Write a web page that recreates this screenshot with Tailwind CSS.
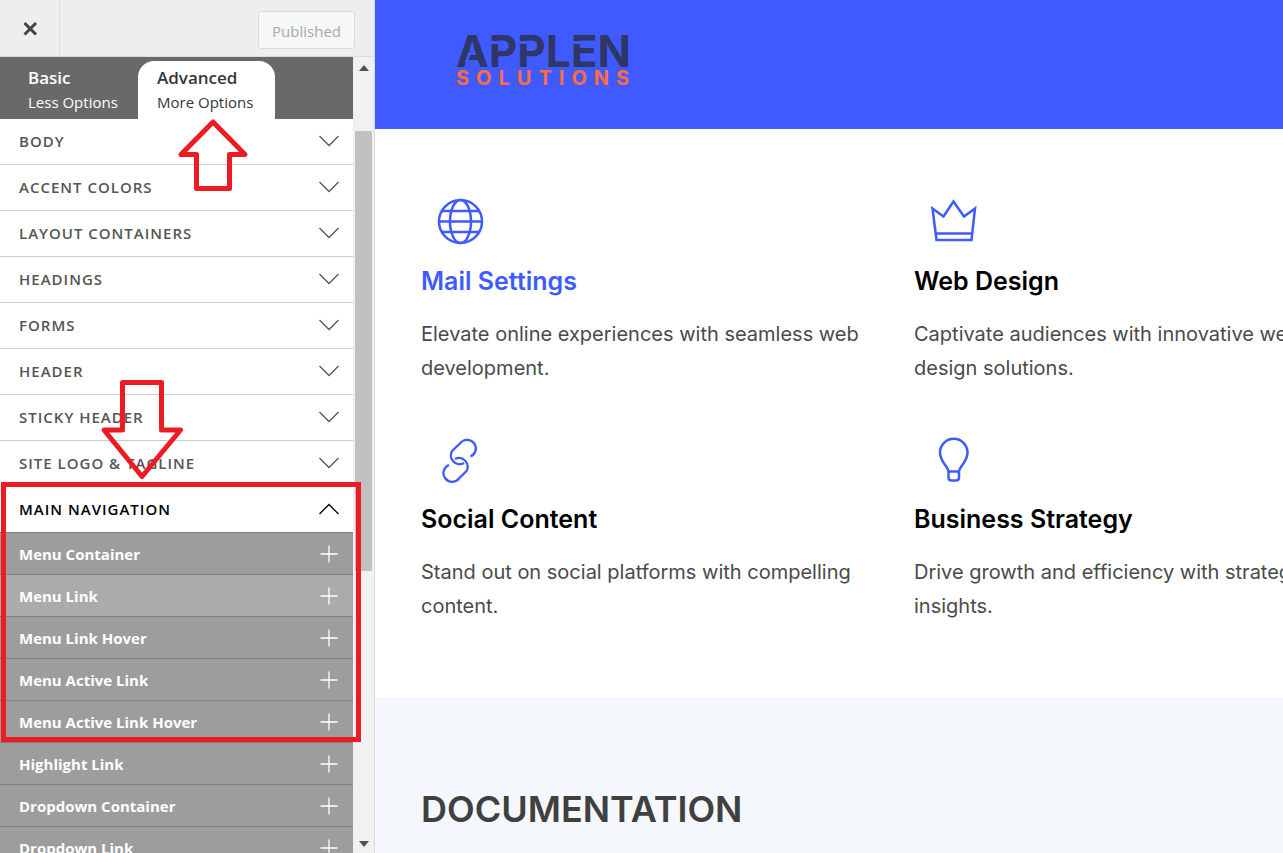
<!DOCTYPE html>
<html lang="en">
  <head>
    <meta charset="UTF-8" />
    <meta name="viewport" content="width=device-width, initial-scale=1.0" />
    <title>Customize: Applen Solutions</title>
    <script src="https://cdn.jsdelivr.net/npm/@tailwindcss/browser@4"></script>
  </head>
  <body class="flex h-screen overflow-hidden bg-white">
    <!-- Customizer sidebar -->
    <aside class="relative flex w-[375px] shrink-0 flex-col border-r border-[#dcdcde] bg-[#f0f0f0] font-['Open_Sans',sans-serif]">
      <header class="flex h-[57px] shrink-0 items-stretch justify-between border-b border-[#dcdcde] bg-[#eeeeee]">
        <button type="button" aria-label="Close" class="flex w-15 items-center justify-center border-r border-[#dcdcde] text-[#3c434a]">
          <svg class="size-4" viewBox="0 0 16 16" fill="none" stroke="currentColor" stroke-width="3"><path d="M2.500 3 14 14.500M14 3 2.500 14.500" /></svg>
        </button>
        <button type="button" disabled class="mt-[11px] mr-[19px] h-[38px] rounded-[3px] border border-[#dcdcde] bg-[#f6f7f7] px-[13px] pt-0.5 text-[15px] text-[#a7aaad]">Published</button>
      </header>

      <div class="flex min-h-0 flex-1">
        <div class="flex min-w-0 flex-1 flex-col overflow-hidden bg-white">
          <div class="flex h-[62px] shrink-0 items-end bg-[#696969]">
            <button type="button" class="h-[58px] w-[138px] pl-7 text-left text-white">
              <span class="block text-[17px] leading-6 font-semibold">Basic</span>
              <span class="block text-[15px] leading-6">Less Options</span>
            </button>
            <button type="button" class="h-[58px] w-[137px] rounded-t-2xl bg-white pl-[19px] text-left text-[#32373c]">
              <span class="block text-[17px] leading-6 font-semibold">Advanced</span>
              <span class="block text-[15px] leading-6">More Options</span>
            </button>
          </div>
          <ul id="sections" class="shrink-0"></ul>
          <ul id="options" class="shrink-0"></ul>
        </div>

        <!-- Scrollbar -->
        <div class="flex w-[21px] shrink-0 flex-col items-center justify-between bg-[#f1f1f1] pt-2 pb-1.5">
          <svg class="h-[6px] w-[10px]" viewBox="0 0 10 6" fill="#505050"><path d="M5 0 10 6H0Z" /></svg>
          <div class="mt-[60px] h-[440px] w-[17px] bg-[#c1c1c1]"></div>
          <svg class="mt-auto h-[6px] w-[10px]" viewBox="0 0 10 6" fill="#505050"><path d="M0 0h10L5 6Z" /></svg>
        </div>
      </div>

      <!-- Annotations over the panel -->
      <svg class="pointer-events-none absolute top-0 left-0 h-[853px] w-[375px]" viewBox="0 0 375 853" fill="none" stroke="#ed1c24" stroke-width="5" stroke-linejoin="round">
        <path d="M213 122 245 154.500H229.500V188.500H196.500V154.500H181Z" />
        <path d="M122.500 382.500H161.500V430H180.500L142 476.500 104 430H122.500Z" />
        <path d="M3.500 484.500H358.500V739.500H3.500Z" stroke-linejoin="miter" />
      </svg>
    </aside>

    <!-- Site preview -->
    <main class="min-w-0 flex-1 overflow-hidden font-['Inter',sans-serif]">
      <header class="h-[129px] bg-[#3f5bff] pt-[33px] pl-[81px]">
        <a href="#" class="relative inline-block">
          <span class="block text-[44px] leading-9 font-bold text-[#2f3768]">APPLEN</span>
          <span class="block text-[20px] leading-[18px] font-bold tracking-[7px] text-[#ff6b3d]">SOLUTIONS</span>
          <!-- Stencil gaps in the wordmark -->
          <svg class="absolute top-0 left-0 h-9 w-44" viewBox="0 0 176 36" fill="none" stroke="#3f5bff" stroke-width="3">
            <path d="M34 9.500H43.500M62.500 9.500H72M116.500 9.500H126" />
            <path d="M13.500 20 10 30" />
          </svg>
        </a>
      </header>

      <section class="grid h-[568px] grid-cols-[447px_447px] grid-rows-[238px_238px] gap-x-[46px] pt-[68px] pl-[46px]">
        <article>
          <svg class="ml-4 size-[48px] text-[#3f5bff]" viewBox="0 0 48 48" fill="none" stroke="currentColor" stroke-width="2.500">
            <circle cx="23.500" cy="24.500" r="21.500" />
            <ellipse cx="23.500" cy="24.500" rx="10.500" ry="21.500" />
            <path d="M5 14h37M2 24.500h43M5 35h37" />
          </svg>
          <h3 class="mt-[20px] text-[25px] leading-8 font-semibold text-[#3f5bff]">Mail Settings</h3>
          <p class="mt-5 text-[20px] leading-[34px] text-[#4a4a4a]">Elevate online experiences with seamless web<br />development.</p>
        </article>
        <article>
          <svg class="ml-4 size-[48px] text-[#3f5bff]" viewBox="0 0 48 48" fill="none" stroke="currentColor" stroke-width="2.500">
            <path d="M2.500 11.500 13.500 19.500 23.500 4.500 34 19.500 45 11.500 41.500 43H6.500ZM6 36.500H42" />
          </svg>
          <h3 class="mt-[20px] text-[25px] leading-8 font-semibold text-black">Web Design</h3>
          <p class="mt-5 text-[20px] leading-[34px] whitespace-nowrap text-[#4a4a4a]">Captivate audiences with innovative web<br />design solutions.</p>
        </article>
        <article>
          <svg class="ml-4 size-[48px] text-[#3f5bff]" viewBox="0 0 48 48" fill="none" stroke="currentColor" stroke-width="2.300">
            <path d="M33.500 21.500A8.700 8.700 0 1 0 23 8.500L15.500 15.500A8.700 8.700 0 0 0 27 28" />
            <path d="M12 30A8.700 8.700 0 1 0 22 43.500L29.500 36A8.700 8.700 0 0 0 18 24" />
          </svg>
          <h3 class="mt-[20px] text-[25px] leading-8 font-semibold text-black">Social Content</h3>
          <p class="mt-5 text-[20px] leading-[34px] text-[#4a4a4a]">Stand out on social platforms with compelling<br />content.</p>
        </article>
        <article>
          <svg class="ml-4 size-[48px] text-[#3f5bff]" viewBox="0 0 48 48" fill="none" stroke="currentColor" stroke-width="2.500">
            <path d="M18.500 36.500C18 31 10 27 10 17.500A13.500 13.500 0 0 1 37.500 17.500C37.500 27 29.500 31 29 36.500ZM18.500 36.500V42.500Q18.500 45.500 21.500 45.500H26Q29 45.500 29 42.500V36.500" />
          </svg>
          <h3 class="mt-[20px] text-[25px] leading-8 font-semibold text-black">Business Strategy</h3>
          <p class="mt-5 text-[20px] leading-[34px] whitespace-nowrap text-[#4a4a4a]">Drive growth and efficiency with strategic<br />insights.</p>
        </article>
      </section>

      <section class="min-h-[400px] bg-[#f4f7fc] pt-[88px] pl-[46px]">
        <h2 class="text-[36px] leading-[48px] font-semibold text-[#404040]">DOCUMENTATION</h2>
      </section>
    </main>

    <script>
      const sections = [
        "Body",
        "Accent Colors",
        "Layout Containers",
        "Headings",
        "Forms",
        "Header",
        "Sticky Header",
        "Site Logo &amp; Tagline",
      ];

      const options = [
        "Menu Container",
        "Menu Link",
        "Menu Link Hover",
        "Menu Active Link",
        "Menu Active Link Hover",
        "Highlight Link",
        "Dropdown Container",
        "Dropdown Link",
      ];

      // Closed panels, then the open one
      document.getElementById("sections").innerHTML =
        sections
          .map(
            (name) => `<li><button type="button" class="flex h-[46px] w-full items-center justify-between border-b border-[#cccccc] pr-[14px] pb-px pl-[19px] text-[15px] font-semibold tracking-[1px] text-[#555555] uppercase">${name}
              <svg class="h-3 w-5 text-[#50575e]" viewBox="0 0 20 12" fill="none" stroke="currentColor" stroke-width="1.300"><path d="M.5 1 10 10.500 19.500 1" /></svg></button></li>`
          )
          .join("") +
        `<li><button type="button" aria-expanded="true" class="flex h-[46px] w-full items-center justify-between border-b border-[#808080] pr-[14px] pb-px pl-[19px] text-[15px] font-semibold tracking-[1px] text-black uppercase">Main Navigation
          <svg class="h-3 w-5" viewBox="0 0 20 12" fill="none" stroke="currentColor" stroke-width="1.300"><path d="M.5 11 10 1.500 19.500 11" /></svg></button></li>`;

      document.getElementById("options").innerHTML = options
        .map(
          (name) => `<li class="${name === "Menu Link" ? "bg-[#ababab]" : "bg-[#9d9d9d]"}"><button type="button" class="flex h-[42px] w-full items-center justify-between border-b border-[#808080] pr-[15px] pl-[19px] text-[15px] font-bold text-white"><span class="pt-0.5">${name}</span>
            <svg class="size-[18px]" viewBox="0 0 18 18" fill="none" stroke="currentColor" stroke-width="1.300"><path d="M9 .5v17M.5 9h17" /></svg></button></li>`
        )
        .join("");
    </script>
  </body>
</html>
